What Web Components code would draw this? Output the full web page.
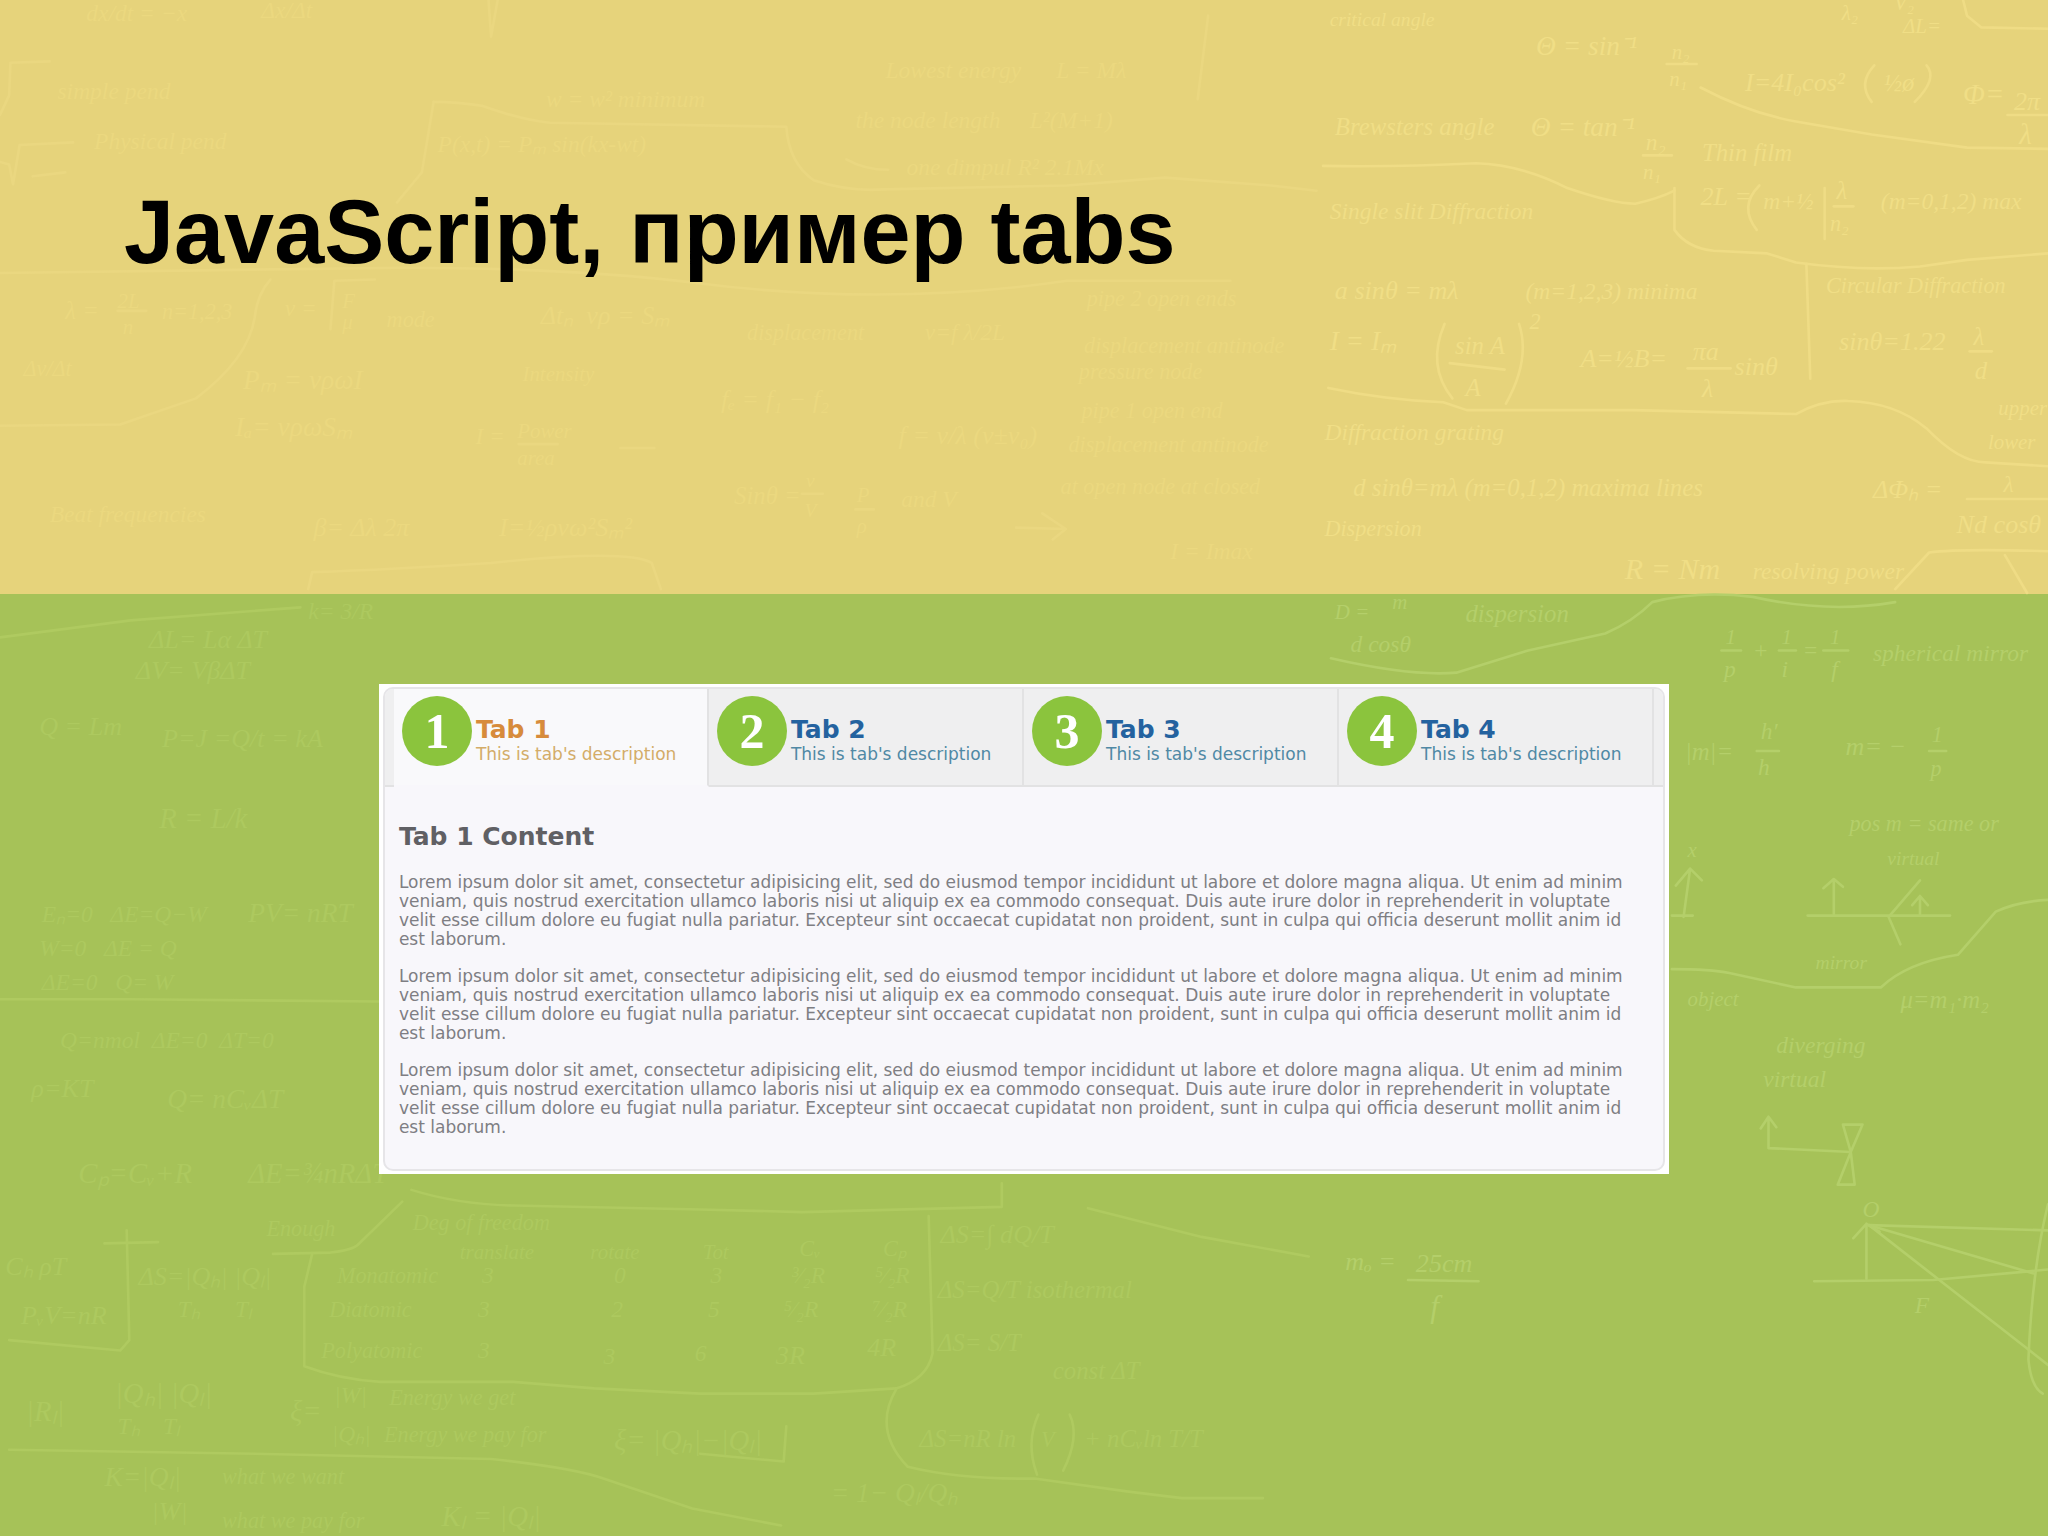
<!DOCTYPE html>
<html lang="ru">
<head>
<meta charset="utf-8">
<title>JavaScript, пример tabs</title>
<style>
    body { margin:0; font-family:"DejaVu Sans",Verdana,sans-serif; }
</style>
</head>
<body>
<lecture-slide>
    <span slot="title">JavaScript, пример tabs</span>
    <tab-box>
        <tab-item slot="tab" number="1" active>Tab 1<span slot="note">This is tab's description</span></tab-item>
        <tab-item slot="tab" number="2">Tab 2<span slot="note">This is tab's description</span></tab-item>
        <tab-item slot="tab" number="3">Tab 3<span slot="note">This is tab's description</span></tab-item>
        <tab-item slot="tab" number="4">Tab 4<span slot="note">This is tab's description</span></tab-item>
        <tab-content>
            <span slot="heading">Tab 1 Content</span>
            <p>Lorem ipsum dolor sit amet, consectetur adipisicing elit, sed do eiusmod tempor incididunt ut labore et dolore magna aliqua. Ut enim ad minim veniam, quis nostrud exercitation ullamco laboris nisi ut aliquip ex ea commodo consequat. Duis aute irure dolor in reprehenderit in voluptate velit esse cillum dolore eu fugiat nulla pariatur. Excepteur sint occaecat cupidatat non proident, sunt in culpa qui officia deserunt mollit anim id est laborum.</p>
            <p>Lorem ipsum dolor sit amet, consectetur adipisicing elit, sed do eiusmod tempor incididunt ut labore et dolore magna aliqua. Ut enim ad minim veniam, quis nostrud exercitation ullamco laboris nisi ut aliquip ex ea commodo consequat. Duis aute irure dolor in reprehenderit in voluptate velit esse cillum dolore eu fugiat nulla pariatur. Excepteur sint occaecat cupidatat non proident, sunt in culpa qui officia deserunt mollit anim id est laborum.</p>
            <p>Lorem ipsum dolor sit amet, consectetur adipisicing elit, sed do eiusmod tempor incididunt ut labore et dolore magna aliqua. Ut enim ad minim veniam, quis nostrud exercitation ullamco laboris nisi ut aliquip ex ea commodo consequat. Duis aute irure dolor in reprehenderit in voluptate velit esse cillum dolore eu fugiat nulla pariatur. Excepteur sint occaecat cupidatat non proident, sunt in culpa qui officia deserunt mollit anim id est laborum.</p>
        </tab-content>
    </tab-box>
</lecture-slide>

<script>
// ===== CHALK BACKDROP =====
// long chalk strokes: dividers, fraction bars, brackets, ray diagrams
const topLines = [
    'M1013 127 Q1070 128 1130 125 Q1165 126 1200 144 Q1235 156 1252 156 Q1270 152 1282 146',
    'M1282 144 V176 Q1292 190 1312 192 L1353 194 L1375 201 Q1426 208 1470 204 L1506 199 L1568 194',
    'M1383 202 L1386 290', 'M1302 67 Q1340 87 1375 93 L1433 103 L1506 113 L1568 114',
    'M1017 297 Q1060 306 1105 308 L1123 314 H1250 L1375 317 Q1395 306 1415 307 Q1451 308 1475 328 Q1500 354 1520 354 L1568 357',
    'M1503 0 L1506 12 L1517 21 L1568 22', 'M1276 49 H1299', 'M1258 119 H1280', 'M1537 88 H1568',
    'M1110 278 L1152 283', 'M1292 282 H1325', 'M1106 248 Q1092 280 1112 305', 'M1163 248 Q1172 275 1153 309',
    'M1435 50 Q1422 64 1433 78', 'M1475 50 Q1484 60 1466 78', 'M1347 142 Q1331 158 1345 176', 'M1397 144 V183',
    'M1404 158 H1419', 'M1508 269 H1525', 'M1506 382 H1568', 'M1451 451 L1477 423 Q1500 420 1568 422 M1535 425 L1552 454'
];
const leftLines = [
    'M332 78 L323 132 L304 155', 'M332 78 Q350 78 369 81 Q400 92 421 94 L602 97 Q604 125 623 138 Q650 147 677 145 L817 142 L892 136 L973 142 L1008 146',
    'M925 12 L917 76', 'M648 122 Q662 130 680 130', 'M207 214 Q197 225 195 243 Q190 275 150 305 L92 325 L0 326',
    'M0 209 L308 205 Q440 205 536 217 Q680 235 817 215 H942', 'M778 404 L816 405 M798 393 L816 405 L806 413',
    'M0 88 L7 73 L8 48 L38 47', 'M0 124 L7 126 L10 141 L15 111 L56 109', 'M25 135 L50 132', 'M374 0 L376 28 L381 0',
    'M253 252 L256 215 L287 214', 'M90 238 H112', 'M397 340 H427', 'M475 343 H501', 'M614 378 H630', 'M655 390 H669',
    'M236 451 L239 438 Q300 436 376 431 Q480 420 499 431 L506 451'
];
const lowLines = [
    'M1019 504 Q1080 518 1115 515 L1170 498 L1229 485 Q1250 476 1265 461 Q1300 452 1342 457 Q1400 470 1451 461',
    'M1318 498 H1333', 'M1362 498 H1375', 'M1396 498 H1415', 'M1345 575 H1362', 'M1477 575 H1490', 'M1078 980 L1132 981',
    'M1280 742 Q1310 742 1324 745 L1375 756 H1440 Q1460 737 1499 731 L1528 698 Q1545 690 1568 689',
    'M1294 665 L1289 702 M1283 678 L1294 665 L1303 674 M1280 701 H1296', 'M1404 674 V700 M1396 680 L1404 673 L1411 679',
    'M1384 701 H1493', 'M1470 687 V700 M1464 693 L1470 686 L1476 693', 'M1470 674 L1446 702 L1455 723',
    'M1354 855 V879 L1417 882 M1348 864 L1354 855 L1360 863', 'M1411 861 H1426 L1417 882 L1420 907 H1407 L1417 882 Z',
    'M1429 979 V937 M1419 948 L1429 937 L1439 943', 'M1389 981 L1480 980 L1568 972', 'M1431 938 L1568 942',
    'M1431 938 L1557 975', 'M1431 938 L1568 1045', 'M1568 922 Q1556 970 1553 1041 Q1555 1062 1564 1067'
];
const lowLeftLines = [
    'M97 942 L99 1026 L92 1034 L7 1026', 'M80 952 L121 951', 'M209 960 L253 959 Q270 957 274 953 L308 920',
    'M239 960 L233 985 V1046 Q260 1056 291 1058 H393 L455 1063 L536 1067 H623 L686 1063 Q710 1056 714 1036 L711 931',
    'M315 911 Q350 922 393 923 L536 926 L614 928 L767 924 V906', 'M7 1110 L195 1113 L376 1117 Q440 1124 462 1132 L530 1155 L598 1168',
    'M686 1064 Q668 1095 695 1123 Q736 1133 792 1132 L864 1142 L905 1147 H967', 'M833 925 L920 947 L1002 962',
    'M795 1083 Q785 1105 794 1129', 'M819 1083 Q827 1100 814 1126', 'M536 1113 L600 1119 L602 1092',
    'M0 488 L100 475 L230 465', 'M0 765 H100 L310 767', 'M330 576 H380'
];
// readable formulas: x, y, size, text
const topNotes = [
    [1018,20,15,'critical angle'], [1176,42,21,'Θ = sin⁻¹'], [1280,45,16,'n₂'], [1278,66,16,'n₁'],
    [1336,70,20,'I=4I₀cos²'], [1442,70,19,'½ø'], [1503,80,22,'Φ='], [1542,84,20,'2π'], [1546,110,22,'λ'],
    [1457,25,16,'ΔL='], [1410,15,16,'λ₂'], [1450,8,16,'V₂'], [1022,103,19,'Brewsters angle'], [1172,104,21,'Θ = tan⁻¹'],
    [1260,115,18,'n₂'], [1258,137,16,'n₁'], [1303,123,19,'Thin film'], [1302,157,20,'2L ='], [1350,160,18,'m+½'],
    [1406,152,19,'λ'], [1401,177,17,'n₂'], [1440,160,18,'(m=0,1,2) max'], [1018,168,18,'Single slit Diffraction'],
    [1022,229,20,'a sinθ = mλ'], [1168,229,18,'(m=1,2,3) minima'], [1018,268,21,'I = Iₘ'], [1114,271,19,'sin A'],
    [1122,303,19,'A'], [1171,252,17,'2'], [1210,281,20,'A=½Β='], [1296,276,20,'πa'], [1303,304,20,'λ'], [1328,287,20,'sinθ'],
    [1398,224,17,'Circular Diffraction'], [1408,268,20,'sinθ=1.22'], [1511,264,19,'λ'], [1512,290,19,'d'],
    [1014,337,18,'Diffraction grating'], [1036,380,19,'d sinθ=mλ (m=0,1,2) maxima lines'], [1434,381,20,'ΔΦₕ ='],
    [1534,377,18,'λ'], [1498,408,20,'Nd cosθ'], [1014,410,17,'Dispersion'], [1244,443,23,'R = Nm'], [1342,443,18,'resolving power'],
    [1530,318,16,'upper'], [1522,344,16,'lower']
];
const leftNotes = [
    [44,76,18,'simple pend'], [72,114,18,'Physical pend'], [418,82,18,'w = w² minimum'], [66,16,18,'dx/dt = −x'], [200,14,18,'Δx/Δt'],
    [335,116,18,'P(x,t) = Pₘ sin(kx-wt)'], [678,60,18,'Lowest energy      L = Mλ'], [655,98,18,'the node length     L²(M+1)'],
    [694,134,18,'one dimpul R² 2.1Mx'], [50,244,19,'λ ='], [90,236,16,'2L'], [94,256,16,'n'], [124,244,17,'n=1,2,3'],
    [218,242,18,'v ='], [262,236,16,'F'], [262,252,16,'μ'], [296,250,17,'mode'], [414,248,20,'Δtₙ  vρ = Sₘ'],
    [572,260,17,'displacement'], [708,260,18,'v=f λ/2L'], [832,234,17,'pipe 2 open ends'], [830,270,17,'displacement antinode'], [826,290,17,'pressure node'],
    [186,298,21,'Pₘ = vρωI'], [180,334,21,'Iₐ= vρωSₘ'], [18,288,17,'Δv/Δt'], [364,340,18,'I ='], [396,335,16,'Power'], [396,356,16,'area'],
    [400,292,16,'Intensity'], [552,312,20,'fₑ = f₁ − f₂'], [688,340,20,'f = v/λ (v±v₀)'], [828,320,17,'pipe 1 open end'],
    [818,346,17,'displacement antinode'], [812,378,17,'at open node at closed'], [562,386,19,'Sinθ ='], [617,373,15,'v'], [616,396,15,'V'],
    [656,384,16,'P'], [656,408,16,'ρ'], [690,388,18,'and V'], [38,400,18,'Beat frequencies'], [240,410,20,'β= Δλ 2π'],
    [382,410,20,'I=½ρvω²Sₘ²'], [896,428,18,'I = Imax']
];
const lowNotes = [
    [1034,499,18,'d cosθ'], [1022,474,16,'D ='], [1066,466,16,'m'], [1122,476,19,'dispersion'],
    [1321,493,16,'1'], [1364,493,16,'1'], [1401,493,16,'1'], [1342,504,18,'+'], [1380,504,18,'='],
    [1320,518,18,'p'], [1364,518,18,'i'], [1402,518,18,'f'], [1434,506,18,'spherical mirror'], [1290,582,19,'|m|='],
    [1348,566,18,'h′'], [1346,593,18,'h'], [1413,578,20,'m= −'], [1479,568,17,'1'], [1478,594,17,'p'], [1416,636,17,'pos m = same or'],
    [1455,772,19,'μ=m₁·m₂'], [1292,770,16,'object'], [1390,742,15,'mirror'], [1445,662,15,'virtual'], [1292,656,16,'x'],
    [1360,806,18,'diverging'], [1350,832,18,'virtual'], [1426,932,18,'O'], [1466,1005,18,'F'], [1030,972,20,'mₒ ='],
    [1084,974,20,'25cm'], [1095,1008,24,'f']
];
const lowLeftNotes = [
    [114,496,20,'ΔL= Lα ΔT'], [104,520,20,'ΔV= VβΔT'], [236,474,18,'k= 3/R'], [30,563,20,'Q = Lm'], [124,572,20,'P=J =Q/t = kA'],
    [122,634,22,'R = L/k'], [190,706,21,'PV= nRT'], [32,706,18,'Eₙ=0   ΔE=Q−W'], [30,732,18,'W=0   ΔE = Q'], [32,758,18,'ΔE=0   Q= W'],
    [46,802,18,'Q=nmol  ΔE=0  ΔT=0'], [24,840,20,'ρ=KT'], [128,848,21,'Q= nCᵥΔT'], [60,906,22,'Cₚ=Cᵥ+R'], [190,906,22,'ΔE=¾nRΔT'],
    [204,946,17,'Enough'], [106,984,20,'ΔS=|Qₕ| |Qₗ|'], [136,1008,18,'Tₕ      Tₗ'], [316,942,17,'Deg of freedom'],
    [352,964,16,'translate'], [452,964,16,'rotate'], [538,964,16,'Tot'], [612,962,17,'Cᵥ'], [676,962,17,'Cₚ'],
    [258,982,17,'Monatomic'], [369,982,18,'3'], [470,982,18,'0'], [544,982,18,'3'], [606,982,18,'³⁄₂R'], [670,982,18,'⁵⁄₂R'],
    [252,1008,17,'Diatomic'], [366,1008,18,'3'], [468,1008,18,'2'], [542,1008,18,'5'], [600,1008,18,'⁵⁄₂R'], [668,1008,18,'⁷⁄₂R'],
    [246,1040,17,'Polyatomic'], [366,1040,18,'3'], [462,1044,18,'3'], [532,1042,18,'6'], [594,1044,20,'3R'], [664,1038,20,'4R'],
    [88,1074,22,'|Qₕ| |Qₗ|'], [90,1098,18,'Tₕ    Tₗ'], [222,1088,22,'ξ='], [256,1074,18,'|W|'], [298,1076,17,'Energy we get'],
    [254,1104,18,'|Qₕ|'], [294,1104,17,'Energy we pay for'], [470,1110,22,'ξ= |Qₕ|−|Qₗ|'],
    [80,1138,21,'K=|Qₗ|'], [170,1136,17,'what we want'], [116,1164,20,'|W|'], [170,1170,17,'what we pay for'], [338,1168,22,'Kₗ = |Qₗ|'],
    [720,952,20,'ΔS=∫ dQ/T'], [718,994,19,'ΔS=Q/T isothermal'], [718,1034,19,'ΔS= S/T'], [806,1056,19,'const ΔT'],
    [704,1108,19,'ΔS=nR ln'], [797,1108,17,'V'], [830,1108,19,'+ nCᵥln T/T'],
    [636,1150,21,'= 1− Qₗ/Qₕ'], [20,1088,22,'|Rₗ|'], [4,976,20,'Cₕ ρT'], [16,1014,20,'PᵥV=nR']
];

const drawGroup = (name, lines, notes) => `<g class="${name}">` +
    lines.map(d => `<path d="${d}"/>`).join('') +
    notes.map(([x, y, s, t]) => `<text x="${x}" y="${y}" font-size="${s}">${t}</text>`).join('') + '</g>';

customElements.define('chalk-backdrop', class extends HTMLElement {
    connectedCallback() {
        this.attachShadow({ mode: 'open' });
        this.shadowRoot.innerHTML = `
            <style>
                :host { display:block; position:absolute; inset:0; overflow:hidden; pointer-events:none; }
                svg { display:block; width:100%; height:100%; }
                text { font-family:"Liberation Serif",serif; font-style:italic; white-space:pre; }
                path { fill:none; stroke-width:2; stroke-linecap:round; stroke-linejoin:round; }
                .top text { fill:#f0de86; } .top path { stroke:#efdc85; }
                .left text { fill:#ebd87f; } .left path { stroke:#ead780; }
                .low text { fill:#b4cf6a; } .low path { stroke:#b4cf6a; }
                .low-left text { fill:#adc95f; } .low-left path { stroke:#afca60; }
            </style>
            <svg viewBox="0 0 1568 1176" preserveAspectRatio="xMidYMid slice" aria-hidden="true">
                ${drawGroup('top', topLines, topNotes)}
                ${drawGroup('left', leftLines, leftNotes)}
                ${drawGroup('low', lowLines, lowNotes)}
                ${drawGroup('low-left', lowLeftLines, lowLeftNotes)}
            </svg>
        `;
    }
});

// ===== SLIDE =====
customElements.define('lecture-slide', class extends HTMLElement {
    connectedCallback() {
        this.attachShadow({ mode: 'open' });
        this.shadowRoot.innerHTML = `
            <style>
                :host { display:grid; grid-template-rows:594px 1fr; min-height:100vh; position:relative; }
                header { background:#e6d37b; padding:180px 124px 0; }
                main { background:#a6c258; padding:90px 0; }
                h1, .body { position:relative; z-index:1; }
                h1 { margin:0; font:bold 90px/104px "Liberation Sans",Arial,sans-serif; color:#000; }
                .body { width:63%; margin:0 auto; }
            </style>
            <header><h1><slot name="title"></slot></h1></header>
            <main><div class="body"><slot></slot></div></main>
            <chalk-backdrop></chalk-backdrop>
        `;
    }
});

// ===== TABS =====
customElements.define('tab-item', class extends HTMLElement {
    connectedCallback() {
        const active = this.hasAttribute('active');
        this.attachShadow({ mode: 'open' });
        this.shadowRoot.innerHTML = `
            <style>
                :host { display:block; flex:1; min-width:0; }
                button {
                    display:flex; align-items:flex-start; gap:4px;
                    box-sizing:border-box; width:100%; height:98px; padding:7px 8px;
                    border:0; border-right:2px solid #e2e2e3; border-bottom:2px solid #e2e2e3;
                    background:#efeff0; color:#24629f;
                    font-family:inherit; text-align:left; cursor:pointer;
                }
                :host([active]) button { background:#f9f9fb; border-bottom-color:#f8f7fb; color:#d78b3c; }
                .num {
                    flex:none; width:70px; height:70px; border-radius:50%;
                    background:#8bc43d; color:#fff;
                    font:bold 50px/70px "Liberation Serif",serif; text-align:center;
                }
                .label { display:block; padding-top:20px; font-weight:bold; font-size:25px; line-height:28px; white-space:nowrap; }
                .note { display:block; font-weight:normal; font-size:17px; line-height:20px; color:#5089a5; }
                :host([active]) .note { color:#d3ac68; }
            </style>
            <button type="button" role="tab" aria-selected="${active}">
                <span class="num">${this.getAttribute('number')}</span>
                <span class="label"><slot></slot><span class="note"><slot name="note"></slot></span></span>
            </button>
        `;
    }
});

customElements.define('tab-content', class extends HTMLElement {
    connectedCallback() {
        this.attachShadow({ mode: 'open' });
        this.shadowRoot.innerHTML = `
            <style>
                :host { display:block; padding:34px 24px 14px 14px; color:#7e7e83; font-size:17px; line-height:19px; }
                h2 { margin:0 0 20px; font-size:25px; line-height:32px; color:#606064; }
                ::slotted(p) { margin:0 0 18px; }
            </style>
            <h2><slot name="heading"></slot></h2>
            <slot></slot>
        `;
    }
});

customElements.define('tab-box', class extends HTMLElement {
    connectedCallback() {
        this.attachShadow({ mode: 'open' });
        this.shadowRoot.innerHTML = `
            <style>
                :host { display:block; background:#fff; padding:3px 4px; }
                .frame { border:2px solid #e6e5e8; border-radius:10px; background:#f8f7fb; overflow:hidden; }
                .tabs { display:flex; }
                .edge { flex:none; box-sizing:border-box; width:9px; background:#efeff0; border-bottom:2px solid #e2e2e3; }
            </style>
            <div class="frame">
                <div class="tabs" role="tablist"><span class="edge"></span><slot name="tab"></slot><span class="edge"></span></div>
                <div role="tabpanel"><slot></slot></div>
            </div>
        `;
    }
});
</script>
</body>
</html>
